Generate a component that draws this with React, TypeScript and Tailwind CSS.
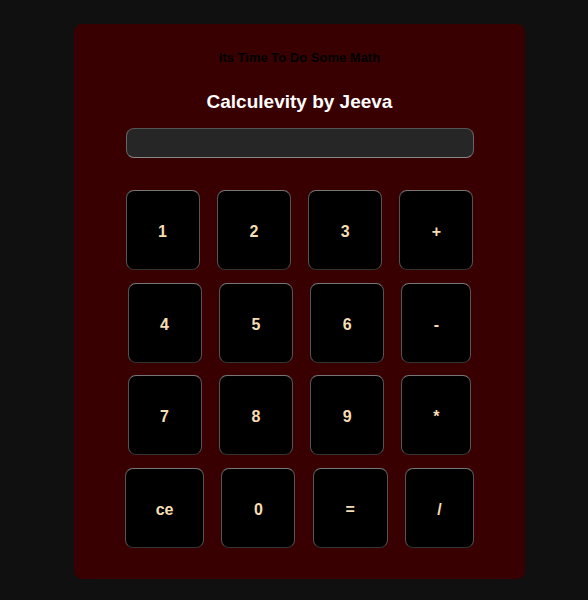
import React from 'react';

const rows = [
  [
    { label: '1', w: 'w-[74px]' },
    { label: '2', w: 'w-[74px]' },
    { label: '3', w: 'w-[74px]' },
    { label: '+', w: 'w-[74px]' },
  ],
  [
    { label: '4', w: 'w-[74px]' },
    { label: '5', w: 'w-[74px]' },
    { label: '6', w: 'w-[74px]' },
    { label: '-', w: 'w-[70px]' },
  ],
  [
    { label: '7', w: 'w-[74px]' },
    { label: '8', w: 'w-[74px]' },
    { label: '9', w: 'w-[74px]' },
    { label: '*', w: 'w-[70px]' },
  ],
  [
    { label: 'ce', w: 'w-[79px]' },
    { label: '0', w: 'w-[74px]' },
    { label: '=', w: 'w-[75px]' },
    { label: '/', w: 'w-[69px]' },
  ],
];

export default function App() {
  return (
    <div className="h-screen overflow-hidden bg-[#101010] pt-[24px] font-['Liberation_Sans',Arial,sans-serif]">
      <div className="ml-[74px] flex w-[451px] h-[555px] flex-col items-center rounded-lg bg-[#380000] pt-[26px]">
        <p className="text-[13px] leading-[16px] font-bold text-black">Its Time To Do Some Math</p>

        <h1 className="mt-[24px] text-[19px] leading-[23px] font-bold text-white">Calculevity by Jeeva</h1>

        <input
          type="text"
          className="mt-[15px] h-[30px] w-[348px] rounded-lg border border-t-[#555] border-x-[#666] border-b-[#888] bg-[#262626] outline-none"
        />

        {/* Keypad */}
        <div className="mt-[32px] flex flex-col gap-[12.7px]">
          {rows.map((row, i) => (
            <div key={i} className="flex justify-center gap-[17.3px]">
              {row.map((btn) => (
                <button
                  key={btn.label}
                  className={`${btn.w} h-[80px] rounded-lg border border-t-[#777] border-x-[#555] border-b-[#333] bg-black pt-[4px] text-[16px] font-bold text-[#f5deb3]`}
                >
                  {btn.label}
                </button>
              ))}
            </div>
          ))}
        </div>
      </div>
    </div>
  );
}
